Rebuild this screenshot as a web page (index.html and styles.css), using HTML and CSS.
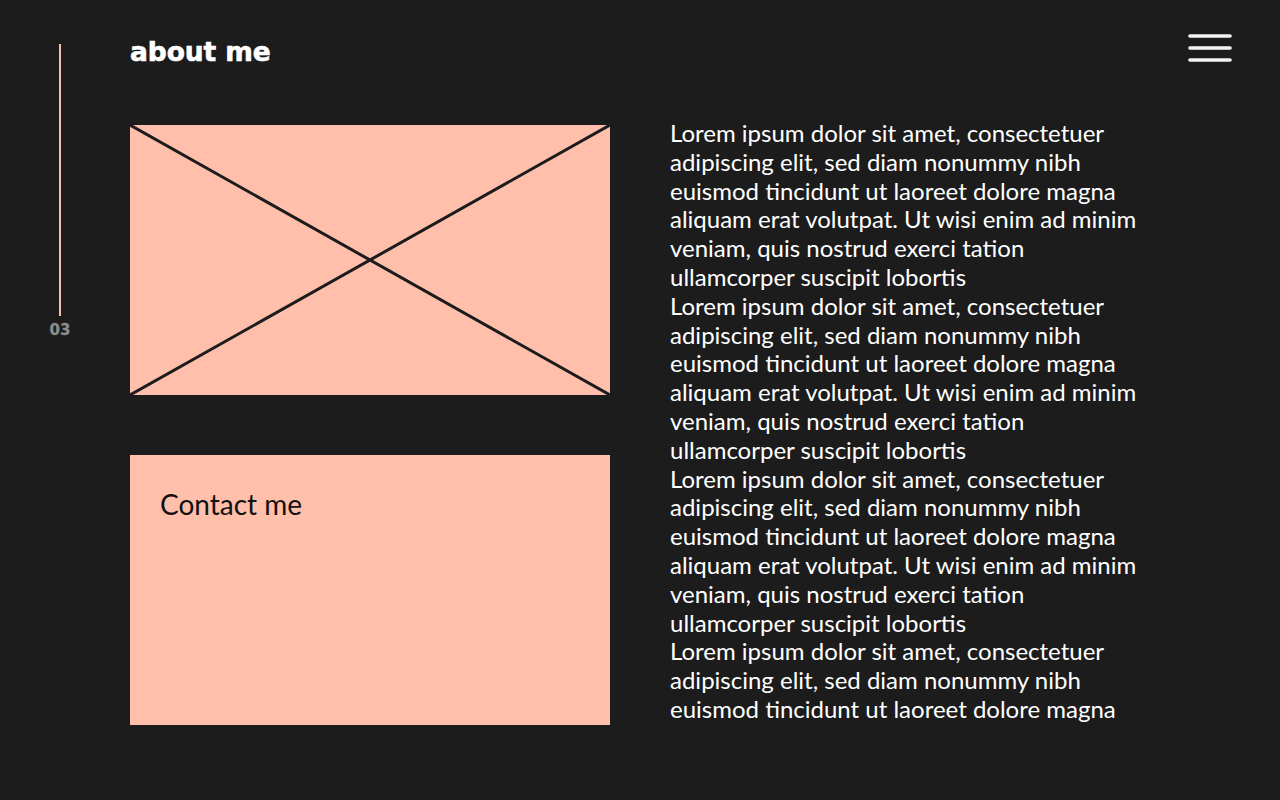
FILE: index.html
```html
<!DOCTYPE html>
<html lang="en">
<head>
<meta charset="utf-8">
<title>about me</title>
<link rel="stylesheet" href="styles.css">
</head>
<body>
<div class="page">
  <aside class="rail">
    <div class="rail-line"></div>
    <div class="rail-num">03</div>
  </aside>
  <main class="main">
    <header class="header">
      <h1 class="title">about me</h1>
      <button class="menu" aria-label="Menu">
        <svg width="44" height="30" viewBox="0 0 44 30">
          <g stroke="#f4f4f4" stroke-width="3.6" stroke-linecap="round">
            <line x1="2" y1="3" x2="42" y2="3"/>
            <line x1="2" y1="15" x2="42" y2="15"/>
            <line x1="2" y1="27" x2="42" y2="27"/>
          </g>
        </svg>
      </button>
    </header>
    <section class="content">
      <div class="cards">
        <div class="placeholder">
          <svg class="cross" viewBox="0 0 480 270" preserveAspectRatio="none">
            <line x1="0" y1="0" x2="480" y2="270"/>
            <line x1="480" y1="0" x2="0" y2="270"/>
          </svg>
        </div>
        <div class="contact">Contact me</div>
      </div>
      <div class="text">
        <p>Lorem ipsum dolor sit amet, consectetuer adipiscing elit, sed diam nonummy nibh euismod tincidunt ut laoreet dolore magna aliquam erat volutpat. Ut wisi enim ad minim veniam, quis nostrud exerci tation ullamcorper suscipit lobortis</p>
        <p>Lorem ipsum dolor sit amet, consectetuer adipiscing elit, sed diam nonummy nibh euismod tincidunt ut laoreet dolore magna aliquam erat volutpat. Ut wisi enim ad minim veniam, quis nostrud exerci tation ullamcorper suscipit lobortis</p>
        <p>Lorem ipsum dolor sit amet, consectetuer adipiscing elit, sed diam nonummy nibh euismod tincidunt ut laoreet dolore magna aliquam erat volutpat. Ut wisi enim ad minim veniam, quis nostrud exerci tation ullamcorper suscipit lobortis</p>
        <p>Lorem ipsum dolor sit amet, consectetuer adipiscing elit, sed diam nonummy nibh euismod tincidunt ut laoreet dolore magna</p>
      </div>
    </section>
  </main>
</div>
</body>
</html>
```

FILE: styles.css
```css
* { box-sizing: border-box; }

html, body {
  margin: 0;
  padding: 0;
  background: #1c1c1c;
}

body {
  font-family: Lato, "Liberation Sans", sans-serif;
  color: #ffffff;
  width: 1280px;
  height: 800px;
  overflow: hidden;
}

.page {
  display: grid;
  grid-template-columns: 130px 1fr;
  height: 800px;
}

.rail {
  display: flex;
  flex-direction: column;
  align-items: center;
  width: 120px;
  padding-top: 44px;
}

.rail-line {
  width: 2px;
  height: 272px;
  background: #f3c0b0;
}

.rail-num {
  margin-top: 5px;
  font-family: "DejaVu Sans", sans-serif;
  font-weight: 700;
  font-size: 15px;
  line-height: 18px;
  color: #8c8c8c;
  -webkit-text-stroke: 0.3px #8c8c8c;
}

.main {
  display: flex;
  flex-direction: column;
  padding-right: 48px;
}

.header {
  display: flex;
  justify-content: space-between;
  align-items: flex-start;
  height: 119px;
  padding-top: 33px;
}

.title {
  margin: 2px 0 0;
  font-family: "DejaVu Sans", sans-serif;
  font-weight: 700;
  font-size: 26.5px;
  line-height: 34px;
  letter-spacing: -0.1px;
  color: #ffffff;
  -webkit-text-stroke: 0.6px #ffffff;
}

.menu {
  background: none;
  border: 0;
  padding: 0;
  cursor: pointer;
  display: block;
}

.menu svg { display: block; }

.content {
  display: flex;
  gap: 60px;
  align-items: flex-start;
}

.cards {
  display: flex;
  flex-direction: column;
  gap: 60px;
  padding-top: 6px;
  width: 480px;
  flex: none;
}

.placeholder {
  width: 480px;
  height: 270px;
  background: #ffbfaa;
}

.cross {
  display: block;
  width: 100%;
  height: 100%;
}

.cross line {
  stroke: #1c1c1c;
  stroke-width: 3;
}

.contact {
  width: 480px;
  height: 270px;
  background: #ffbfaa;
  padding: 33px 30px;
  color: #111111;
  font-size: 28px;
  line-height: 1.2;
}

.text {
  width: 480px;
  font-size: 24px;
  line-height: 1.2;
  color: #ffffff;
}

.text p {
  margin: 0;
}
```
